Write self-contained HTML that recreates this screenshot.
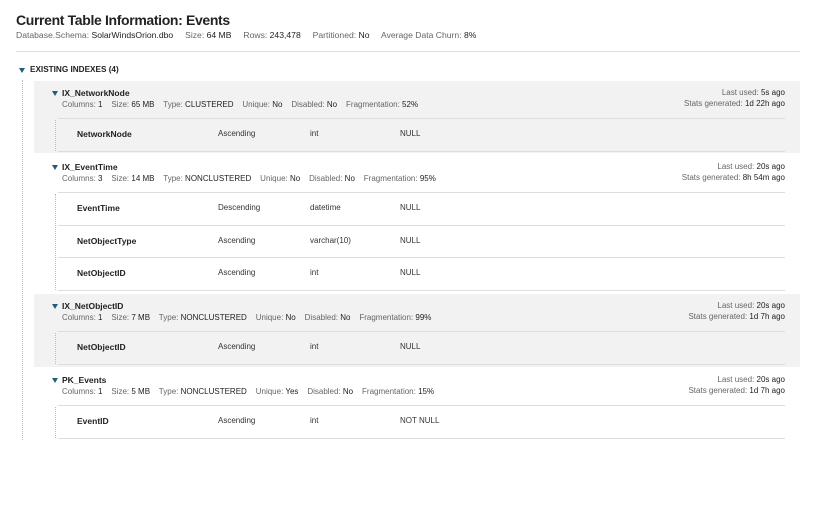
<!DOCTYPE html>
<html><head><meta charset="utf-8"><style>
*{margin:0;padding:0;box-sizing:border-box}
body{width:816px;height:510px;background:#fff;font-family:"Liberation Sans",sans-serif;color:#333;position:relative;overflow:hidden}
.a{position:absolute;white-space:nowrap}
.t{font-size:14px;font-weight:bold;color:#222;left:16px;top:12px;letter-spacing:-0.35px}
.s{font-size:8px;color:#666;line-height:10px}
.s b{font-weight:normal;color:#222}
.hr{position:absolute;height:1px;background:#ddd}
.box{position:absolute;background:#f2f2f2;left:34px;width:766px}
.tri{position:absolute;width:0;height:0;border-left:3.5px solid transparent;border-right:3.5px solid transparent;border-top:5px solid #1f5f7a}
.n{font-size:8.5px;font-weight:bold;color:#222}
.c{font-size:8px;color:#333}
.r{text-align:right;right:31px}
.vd{position:absolute;width:0;border-left:1px dotted #bbb}
</style></head><body>
<div class="a t">Current Table Information: Events</div>
<div class="a s" style="left:16px;top:30px;font-size:8.6px">Database.Schema: <b>SolarWindsOrion.dbo</b>&nbsp;&nbsp;&nbsp;&nbsp; Size: <b>64 MB</b>&nbsp;&nbsp;&nbsp;&nbsp; Rows: <b>243,478</b>&nbsp;&nbsp;&nbsp;&nbsp; Partitioned: <b>No</b>&nbsp;&nbsp;&nbsp;&nbsp; Average Data Churn: <b>8%</b></div>
<div class="hr" style="left:16px;width:784px;top:51px"></div>
<div class="tri" style="left:19px;top:68px"></div>
<div class="a n" style="left:30px;top:65px;font-size:8.2px">EXISTING INDEXES (4)</div>
<div class="vd" style="left:22px;top:80px;height:360px"></div>

<div class="box" style="top:81px;height:72px"></div>
<div class="box" style="top:294px;height:73px"></div>

<!-- index 1 -->
<div class="tri" style="left:52px;top:91px"></div>
<div class="a n" style="left:62px;top:88px">IX_NetworkNode</div>
<div class="a s" style="left:62px;top:100px">Columns: <b>1</b>&nbsp;&nbsp;&nbsp; Size: <b>65 MB</b>&nbsp;&nbsp;&nbsp; Type: <b>CLUSTERED</b>&nbsp;&nbsp;&nbsp; Unique: <b>No</b>&nbsp;&nbsp;&nbsp; Disabled: <b>No</b>&nbsp;&nbsp;&nbsp; Fragmentation: <b>52%</b></div>
<div class="a s r" style="top:88px">Last used: <b>5s ago</b></div>
<div class="a s r" style="top:99px">Stats generated: <b>1d 22h ago</b></div>
<div class="hr" style="left:58px;width:727px;top:118px"></div>
<div class="vd" style="left:55px;top:120px;height:31px"></div>
<div class="a n" style="left:77px;top:129px">NetworkNode</div>
<div class="a c" style="left:218px;top:129px">Ascending</div>
<div class="a c" style="left:310px;top:129px">int</div>
<div class="a c" style="left:400px;top:129px">NULL</div>
<div class="hr" style="left:58px;width:727px;top:151px"></div>

<!-- index 2 -->
<div class="tri" style="left:52px;top:165px"></div>
<div class="a n" style="left:62px;top:162px">IX_EventTime</div>
<div class="a s" style="left:62px;top:174px">Columns: <b>3</b>&nbsp;&nbsp;&nbsp; Size: <b>14 MB</b>&nbsp;&nbsp;&nbsp; Type: <b>NONCLUSTERED</b>&nbsp;&nbsp;&nbsp; Unique: <b>No</b>&nbsp;&nbsp;&nbsp; Disabled: <b>No</b>&nbsp;&nbsp;&nbsp; Fragmentation: <b>95%</b></div>
<div class="a s r" style="top:162px">Last used: <b>20s ago</b></div>
<div class="a s r" style="top:173px">Stats generated: <b>8h 54m ago</b></div>
<div class="hr" style="left:58px;width:727px;top:192px"></div>
<div class="vd" style="left:55px;top:194px;height:96px"></div>
<div class="a n" style="left:77px;top:203px">EventTime</div>
<div class="a c" style="left:218px;top:203px">Descending</div>
<div class="a c" style="left:310px;top:203px">datetime</div>
<div class="a c" style="left:400px;top:203px">NULL</div>
<div class="hr" style="left:58px;width:727px;top:225px"></div>
<div class="a n" style="left:77px;top:236px">NetObjectType</div>
<div class="a c" style="left:218px;top:236px">Ascending</div>
<div class="a c" style="left:310px;top:236px">varchar(10)</div>
<div class="a c" style="left:400px;top:236px">NULL</div>
<div class="hr" style="left:58px;width:727px;top:257px"></div>
<div class="a n" style="left:77px;top:268px">NetObjectID</div>
<div class="a c" style="left:218px;top:268px">Ascending</div>
<div class="a c" style="left:310px;top:268px">int</div>
<div class="a c" style="left:400px;top:268px">NULL</div>
<div class="hr" style="left:58px;width:727px;top:290px"></div>

<!-- index 3 -->
<div class="tri" style="left:52px;top:304px"></div>
<div class="a n" style="left:62px;top:301px">IX_NetObjectID</div>
<div class="a s" style="left:62px;top:313px">Columns: <b>1</b>&nbsp;&nbsp;&nbsp; Size: <b>7 MB</b>&nbsp;&nbsp;&nbsp; Type: <b>NONCLUSTERED</b>&nbsp;&nbsp;&nbsp; Unique: <b>No</b>&nbsp;&nbsp;&nbsp; Disabled: <b>No</b>&nbsp;&nbsp;&nbsp; Fragmentation: <b>99%</b></div>
<div class="a s r" style="top:301px">Last used: <b>20s ago</b></div>
<div class="a s r" style="top:312px">Stats generated: <b>1d 7h ago</b></div>
<div class="hr" style="left:58px;width:727px;top:331px"></div>
<div class="vd" style="left:55px;top:333px;height:31px"></div>
<div class="a n" style="left:77px;top:342px">NetObjectID</div>
<div class="a c" style="left:218px;top:342px">Ascending</div>
<div class="a c" style="left:310px;top:342px">int</div>
<div class="a c" style="left:400px;top:342px">NULL</div>
<div class="hr" style="left:58px;width:727px;top:364px"></div>

<!-- index 4 -->
<div class="tri" style="left:52px;top:378px"></div>
<div class="a n" style="left:62px;top:375px">PK_Events</div>
<div class="a s" style="left:62px;top:387px">Columns: <b>1</b>&nbsp;&nbsp;&nbsp; Size: <b>5 MB</b>&nbsp;&nbsp;&nbsp; Type: <b>NONCLUSTERED</b>&nbsp;&nbsp;&nbsp; Unique: <b>Yes</b>&nbsp;&nbsp;&nbsp; Disabled: <b>No</b>&nbsp;&nbsp;&nbsp; Fragmentation: <b>15%</b></div>
<div class="a s r" style="top:375px">Last used: <b>20s ago</b></div>
<div class="a s r" style="top:386px">Stats generated: <b>1d 7h ago</b></div>
<div class="hr" style="left:58px;width:727px;top:405px"></div>
<div class="vd" style="left:55px;top:407px;height:31px"></div>
<div class="a n" style="left:77px;top:416px">EventID</div>
<div class="a c" style="left:218px;top:416px">Ascending</div>
<div class="a c" style="left:310px;top:416px">int</div>
<div class="a c" style="left:400px;top:416px">NOT NULL</div>
<div class="hr" style="left:58px;width:727px;top:438px"></div>
</body></html>
